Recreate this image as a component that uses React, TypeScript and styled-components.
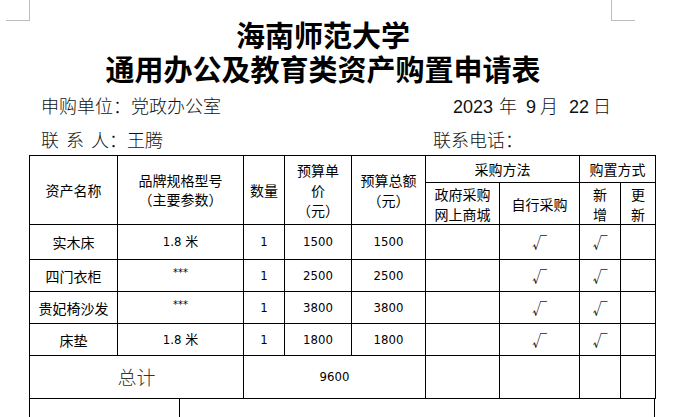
import React from "react";
import styled, { createGlobalStyle } from "styled-components";

const GlobalStyle = createGlobalStyle`
  html, body { margin: 0; padding: 0; background: #fff; overflow: hidden; }
  body { font-family: "Noto Sans CJK SC", sans-serif; color: #000; }
`;

const CJK = `"Noto Sans CJK SC", sans-serif`;
const NUM = `"DejaVu Sans Condensed", "DejaVu Sans", "Noto Sans CJK SC", sans-serif`;

const Page = styled.div`
  position: relative;
  width: 681px;
  height: 417px;
  overflow: hidden;
  padding-left: 29px;
  box-sizing: border-box;
`;

const CornerMark = styled.div<{ $side: "left" | "right" }>`
  position: absolute;
  top: 0;
  width: 23px;
  height: 20px;
  ${(p) =>
    p.$side === "left"
      ? `left: 6px; border-right: 1px solid #bdbdbd; border-bottom: 1px solid #bdbdbd;`
      : `left: 611px; border-left: 1px solid #bdbdbd; border-bottom: 1px solid #bdbdbd;`}
`;

const Title = styled.h1`
  margin: 0;
  padding-top: 17px;
  width: 588px;
  text-align: center;
  font-family: ${CJK};
  font-weight: 700;
  font-size: 29px;
  line-height: 34px;
`;

const Info = styled.div`
  margin-top: 4px;
  width: 582px;
  font-family: ${CJK};
  font-size: 18px;
  line-height: 32px;
  font-weight: 300;
  color: #111;
`;

const InfoRow = styled.div`
  display: grid;
  grid-template-columns: 392px 1fr;
  padding-left: 12px;
`;

const InfoCell = styled.span<{ $right?: boolean }>`
  white-space: nowrap;
  text-align: ${(p) => (p.$right ? "right" : "left")};
`;

const Gap = styled.span<{ $w: number }>`
  display: inline-block;
  width: ${(p) => p.$w}px;
`;

const DateNum = styled.span`
  font-family: "Liberation Sans", sans-serif;
  font-weight: 400;
  font-size: 18px;
`;

const Table = styled.table`
  border-collapse: collapse;
  table-layout: fixed;
  width: 626px;
  font-family: ${CJK};
  font-size: 14px;
`;

const Cell = styled.td<{ $h?: number; $num?: boolean; $big?: boolean; $lh?: number }>`
  border: 1px solid #000;
  padding: 0;
  text-align: center;
  vertical-align: middle;
  height: ${(p) => (p.$h ? `${p.$h}px` : "auto")};
  font-family: ${(p) => (p.$num ? NUM : CJK)};
  font-size: ${(p) => (p.$big ? "19px" : p.$num ? "13px" : "14px")};
  color: ${(p) => (p.$big ? "#333" : "#000")};
  font-weight: ${(p) => (p.$big ? 300 : 400)};
  line-height: ${(p) => (p.$lh ? `${p.$lh}px` : "20px")};
  white-space: nowrap;
  overflow: hidden;
`;

const Check = styled.span`
  font-family: "Noto Sans CJK SC", sans-serif;
  font-size: 15px;
  color: #1a1a2e;
`;

const Stars = styled.span`
  font-family: ${NUM};
  font-size: 11px;
  position: relative;
  top: -3px;
`;

const FooterRow = styled.div`
  display: grid;
  grid-template-columns: 149px 1fr;
  width: 626px;
  height: 40px;
  box-sizing: border-box;
  border-left: 1px solid #000;
  border-right: 1px solid #000;
`;

const FooterCell = styled.div`
  & + & {
    border-left: 1px solid #000;
  }
`;

const colWidths = [88, 126, 41, 67, 74, 74, 80, 41, 35];

type Row = { name: string; spec: string; qty: string; price: string; total: string };

const rows: Row[] = [
  { name: "实木床", spec: "1.8 米", qty: "1", price: "1500", total: "1500" },
  { name: "四门衣柜", spec: "***", qty: "1", price: "2500", total: "2500" },
  { name: "贵妃椅沙发", spec: "***", qty: "1", price: "3800", total: "3800" },
  { name: "床垫", spec: "1.8 米", qty: "1", price: "1800", total: "1800" },
];

const rowHeights = [34, 31, 31, 31];

export default function App() {
  return (
    <>
      <GlobalStyle />
      <Page>
        <CornerMark $side="left" />
        <CornerMark $side="right" />
        <Title>
          海南师范大学
          <br />
          通用办公及教育类资产购置申请表
        </Title>
        <Info>
          <InfoRow>
            <InfoCell>申购单位：党政办公室</InfoCell>
            <InfoCell $right>
              <DateNum>2023</DateNum>
              <Gap $w={6} />年<Gap $w={9} />
              <DateNum>9</DateNum>
              <Gap $w={4} />月<Gap $w={11} />
              <DateNum>22</DateNum>
              <Gap $w={4} />日
            </InfoCell>
          </InfoRow>
          <InfoRow>
            <InfoCell>
              联<Gap $w={7} />系<Gap $w={7} />人：王腾
            </InfoCell>
            <InfoCell>联系电话：</InfoCell>
          </InfoRow>
        </Info>
        <Table>
          <colgroup>
            {colWidths.map((w, i) => (
              <col key={i} style={{ width: w }} />
            ))}
          </colgroup>
          <tbody>
            <tr>
              <Cell rowSpan={2}>资产名称</Cell>
              <Cell rowSpan={2} $lh={19}>
                品牌规格型号
                <br />
                （主要参数）
              </Cell>
              <Cell rowSpan={2}>数量</Cell>
              <Cell rowSpan={2}>
                预算单
                <br />
                价
                <br />
                （元）
              </Cell>
              <Cell rowSpan={2}>
                预算总额
                <br />
                （元）
              </Cell>
              <Cell colSpan={2} $h={26}>
                采购方法
              </Cell>
              <Cell colSpan={2} $h={26}>
                购置方式
              </Cell>
            </tr>
            <tr>
              <Cell $h={41}>
                政府采购
                <br />
                网上商城
              </Cell>
              <Cell $h={41}>自行采购</Cell>
              <Cell $h={41}>
                新<br />增
              </Cell>
              <Cell $h={41}>
                更<br />新
              </Cell>
            </tr>
            {rows.map((r, i) => (
              <tr key={r.name}>
                <Cell $h={rowHeights[i]}>{r.name}</Cell>
                <Cell $num>{r.spec === "***" ? <Stars>***</Stars> : r.spec}</Cell>
                <Cell $num>{r.qty}</Cell>
                <Cell $num>{r.price}</Cell>
                <Cell $num>{r.total}</Cell>
                <Cell />
                <Cell>
                  <Check>√</Check>
                </Cell>
                <Cell>
                  <Check>√</Check>
                </Cell>
                <Cell />
              </tr>
            ))}
            <tr>
              <Cell colSpan={2} $h={42} $big>
                总计
              </Cell>
              <Cell colSpan={3} $num>
                9600
              </Cell>
              <Cell />
              <Cell />
              <Cell />
              <Cell />
            </tr>
          </tbody>
        </Table>
        <FooterRow>
          <FooterCell />
          <FooterCell />
        </FooterRow>
      </Page>
    </>
  );
}
